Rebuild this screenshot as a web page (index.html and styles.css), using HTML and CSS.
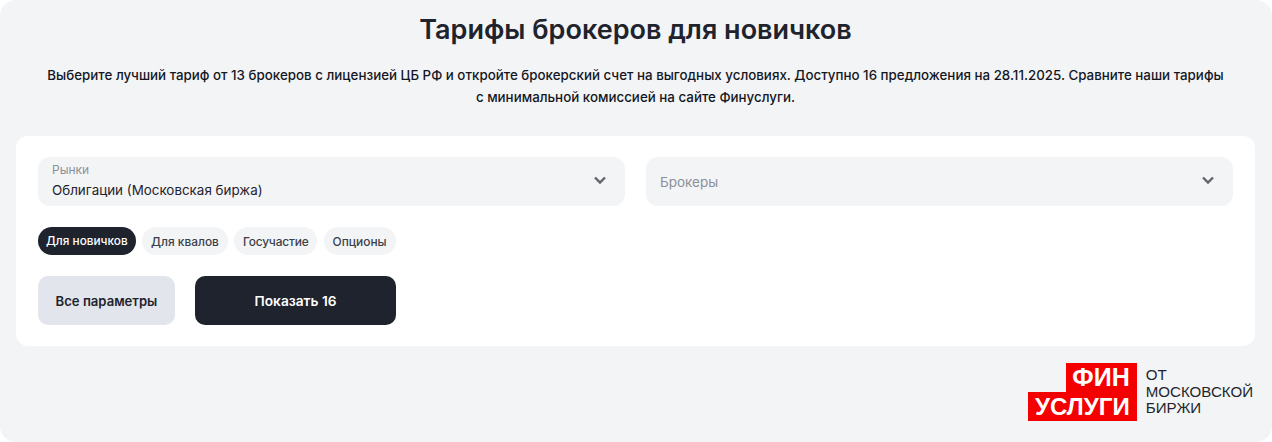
FILE: index.html
```html
<!DOCTYPE html>
<html lang="ru">
<head>
  <meta charset="UTF-8" />
  <meta name="viewport" content="width=device-width, initial-scale=1.0" />
  <title>Тарифы брокеров для новичков</title>
  <link rel="stylesheet" href="styles.css">
</head>
<body>

  <div class="page">
    <h1 class="title">Тарифы брокеров для новичков</h1>
    <p class="lead">Выберите лучший тариф от 13 брокеров с лицензией ЦБ РФ и откройте брокерский счет на выгодных условиях. Доступно 16 предложения на 28.11.2025. Сравните наши тарифы с минимальной комиссией на сайте Финуслуги.</p>

    <div class="card">
      <div class="selects">
        <div class="select">
          <div class="select-text">
            <span class="select-label">Рынки</span>
            <span class="select-value">Облигации (Московская биржа)</span>
          </div>
          <svg class="chevron" width="14" height="9" viewBox="0 0 14 9"><path d="M2 1.5 7 6.5l5-5" fill="none" stroke="#5f646c" stroke-width="2.4"/></svg>
        </div>
        <div class="select">
          <div class="select-text">
            <span class="select-placeholder">Брокеры</span>
          </div>
          <svg class="chevron" width="14" height="9" viewBox="0 0 14 9"><path d="M2 1.5 7 6.5l5-5" fill="none" stroke="#5f646c" stroke-width="2.4"/></svg>
        </div>
      </div>

      <div class="chips">
        <span class="chip active">Для новичков</span>
        <span class="chip">Для квалов</span>
        <span class="chip chip-tight">Госучастие</span>
        <span class="chip">Опционы</span>
      </div>

      <div class="actions">
        <button class="btn btn-params">Все параметры</button>
        <button class="btn btn-show">Показать 16</button>
      </div>
    </div>

    <div class="footer">
      <div class="logo">
        <div class="logo-red">
          <span class="logo-top">ФИН</span>
          <span class="logo-bottom">УСЛУГИ</span>
        </div>
        <div class="logo-text">ОТ<br>МОСКОВСКОЙ<br>БИРЖИ</div>
      </div>
    </div>
  </div>

</body>
</html>
```

FILE: styles.css
```css
* {
  box-sizing: border-box;
}

body {
  margin: 0;
  background: #fff;
  font-family: Inter, 'Noto Sans', sans-serif;
  color: #1f232d;
}

.page {
  height: 442px;
  padding: 14px 17px 0 16px;
  background: #f3f4f6;
  border-radius: 16px;
  overflow: hidden;
}

.title {
  margin: 0;
  font-size: 27px;
  line-height: 32px;
  font-weight: 600;
  text-align: center;
}

.lead {
  width: 1185px;
  margin: 18px auto 0;
  font-size: 13.35px;
  line-height: 22px;
  font-weight: 450;
  color: #14171f;
  text-align: center;
}

.card {
  margin-top: 28px;
  height: 210px;
  padding: 21px 22px;
  background: #fff;
  border-radius: 12px;
}

.selects {
  display: grid;
  grid-template-columns: 1fr 1fr;
  gap: 21px;
}

.select {
  height: 49px;
  padding: 0 18px 0 14px;
  display: flex;
  justify-content: space-between;
  align-items: center;
  background: #f3f4f6;
  border-radius: 12px;
}

.select-text {
  display: flex;
  flex-direction: column;
}

.select-label {
  font-size: 12px;
  line-height: 15px;
  color: #8b9099;
  margin-top: -2px;
}

.select-value {
  margin-top: 3px;
  font-size: 13.4px;
  line-height: 20px;
}

.select-placeholder {
  font-size: 13.5px;
  line-height: 20px;
  color: #8b9099;
}

.chevron {
  margin-top: -3px;
}

.chips {
  display: flex;
  gap: 6.5px;
  margin-top: 21px;
}

.chip {
  height: 28px;
  padding: 0 9px;
  display: flex;
  align-items: center;
  font-size: 11.9px;
  font-weight: 500;
  color: #3a3f4a;
  background: #f3f4f6;
  border-radius: 14px;
}

.chip-tight {
  padding: 0 8.5px;
  letter-spacing: -0.15px;
}

.chip.active {
  padding: 0 8px;
  font-size: 11.8px;
  color: #fff;
  background: #1f232d;
}

.actions {
  display: flex;
  gap: 20px;
  margin-top: 21px;
}

.btn {
  height: 49px;
  border: none;
  border-radius: 10px;
  font-family: inherit;
  font-weight: 600;
}

.btn-params {
  width: 137px;
  font-size: 13.1px;
  background: #e2e5ec;
  color: #1f232d;
}

.btn-show {
  width: 201px;
  font-size: 13.7px;
  background: #1f232d;
  color: #fff;
}

.footer {
  display: flex;
  justify-content: flex-end;
  margin-top: 17px;
  padding-right: 2px;
}

.logo {
  display: flex;
  gap: 9px;
}

.logo-red {
  display: flex;
  flex-direction: column;
  align-items: flex-end;
  font-family: 'Liberation Sans', Arial, sans-serif;
  font-weight: 700;
  color: #fff;
}

.logo-top,
.logo-bottom {
  display: block;
  height: 29px;
  line-height: 29px;
  background: #f40000;
}

.logo-top {
  padding: 0 7px 0 6px;
  font-size: 25px;
}

.logo-bottom {
  padding: 0 7px;
  font-size: 24.1px;
}

.logo-text {
  font-family: 'Liberation Sans', Arial, sans-serif;
  font-size: 15.1px;
  line-height: 16.5px;
  color: #22252b;
  padding-top: 4px;
}
```
